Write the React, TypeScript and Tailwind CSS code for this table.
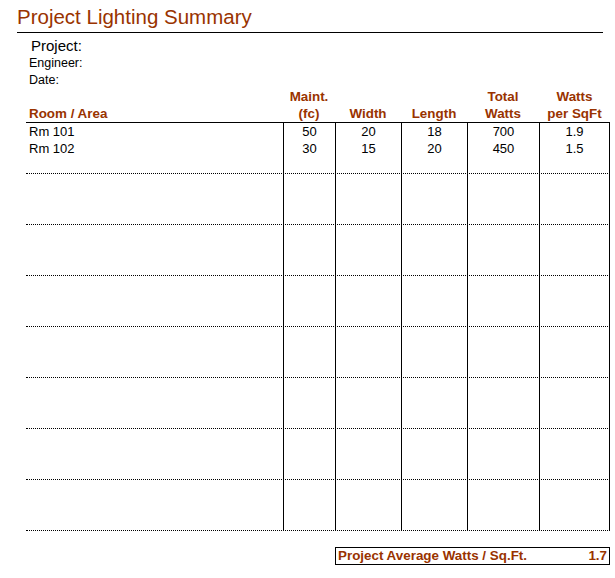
import React from 'react';

const cols = 'grid grid-cols-[257px_52px_66px_66px_72px_71px]';
const head = 'h-[17px] pt-px leading-[16px] text-[13.4px] font-bold text-[#993300] text-center whitespace-nowrap';
const cell = 'h-[17px] pt-px leading-[16px] text-[13px] text-black text-center';

type Room = { name: string; maint: number; width: number; length: number; watts: number; perSqFt: string };

const rooms: Room[] = [
    { name: 'Rm 101', maint: 50, width: 20, length: 18, watts: 700, perSqFt: '1.9' },
    { name: 'Rm 102', maint: 30, width: 15, length: 20, watts: 450, perSqFt: '1.5' },
];

const Block: React.FC<{ rows: (Room | null)[] }> = ({ rows }) => (
    <div className={`${cols} h-[51px] border-b border-dotted border-black`}>
        <div className="flex flex-col">
            {rows.map((r, i) => (
                <div key={i} className={`${cell} text-left pl-[3px]`}>{r ? r.name : ''}</div>
            ))}
        </div>
        {(['maint', 'width', 'length', 'watts', 'perSqFt'] as const).map((k, ci) => (
            <div key={k} className={`flex flex-col border-l border-black ${ci === 4 ? 'border-r' : ''}`}>
                {rows.map((r, i) => (
                    <div key={i} className={cell}>{r ? r[k] : ''}</div>
                ))}
            </div>
        ))}
    </div>
);

export default function App() {
    return (
        <div className="w-[615px] h-[578px] bg-white font-['Liberation_Sans',Arial,sans-serif] text-black overflow-hidden">
            <div className="h-[32px] pt-[7px] pl-[17px] text-[20.5px] leading-[20px] text-[#993300]">
                Project Lighting Summary
            </div>
            <div className="ml-[17px] w-[586px] border-t border-black" />

            <div className="h-[21px] pt-[5px] pl-[31px] text-[15px] leading-[15px]">Project:</div>
            <div className="h-[17px] pt-px pl-[29px] text-[12.5px] leading-[16px]">Engineer:</div>
            <div className="h-[17px] pt-px pl-[29px] text-[12.5px] leading-[16px]">Date:</div>

            <div className="ml-[26px] w-[584px]">
                <div className={`${cols} border-b border-black`}>
                    <div className={head} />
                    <div className={head}>Maint.</div>
                    <div className={head} />
                    <div className={head} />
                    <div className={head}>Total</div>
                    <div className={head}>Watts</div>

                    <div className={`${head} text-left pl-[3px]`}>Room / Area</div>
                    <div className={head}>(fc)</div>
                    <div className={head}>Width</div>
                    <div className={head}>Length</div>
                    <div className={head}>Watts</div>
                    <div className={head}>per SqFt</div>
                </div>

                <Block rows={[rooms[0], rooms[1], null]} />
                {Array.from({ length: 7 }).map((_, i) => (
                    <Block key={i} rows={[null, null, null]} />
                ))}

                <div className="h-[16px]" />
                <div className="ml-[309px] w-[275px] h-[18px] border border-black flex justify-between px-[2px] text-[13.4px] leading-[16px] font-bold text-[#993300]">
                    <span>Project Average Watts / Sq.Ft.</span>
                    <span>1.7</span>
                </div>
            </div>
        </div>
    );
}
